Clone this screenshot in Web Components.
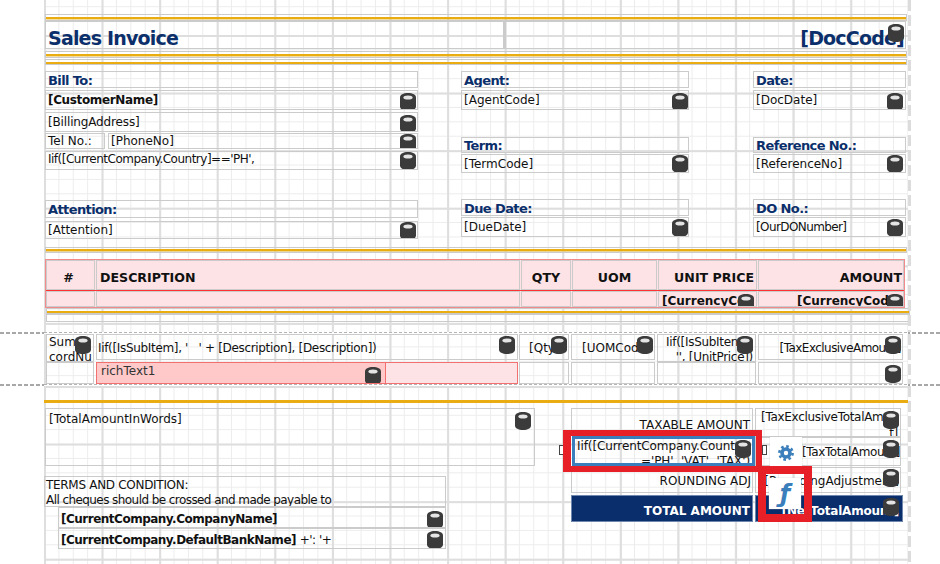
<!doctype html>
<html>
<head>
<meta charset="utf-8">
<title>Sales Invoice designer</title>
<style>
  html, body { margin: 0; height: 100%; overflow: hidden; background: #fff; }
  body { font: 12px "DejaVu Sans", Verdana, sans-serif; color: #111; }
</style>
</head>
<body>
<report-surface>
  <report-band top="0" height="332" grid="35">
    <report-cell at="45 14 862 7" rule="17"></report-cell>
    <report-cell at="45 21 459 28" kind="title" style="--pad-top:6px">Sales Invoice</report-cell>
    <report-cell at="504 21 402 28" kind="title" align="right" db="887 24" class="split" style="--pad-top:6px;--pad-right:1px">[DocCode]</report-cell>
    <report-cell at="45 51 862 7" rule="54"></report-cell>
    <report-cell at="45 59 862 6" rule="62"></report-cell>

    <report-cell at="45 71 373 17" kind="label" style="--pad-top:1px">Bill To:</report-cell>
    <report-cell at="45 90 373 20" kind="strong" db="400 93">[CustomerName]</report-cell>
    <report-cell at="45 112 373 20" db="400 115" style="--track:-.15px">[BillingAddress]</report-cell>
    <report-cell at="45 133 60 16">Tel No.:</report-cell>
    <report-cell at="108 133 310 16" db="400 134">[PhoneNo]</report-cell>
    <report-cell at="45 151 373 19" valign="top" db="400 152" style="--track:-.5px">Iif([CurrentCompany.Country]=='PH',</report-cell>
    <report-cell at="45 200 373 18" kind="label" style="--pad-top:0">Attention:</report-cell>
    <report-cell at="45 221 373 18" db="400 222">[Attention]</report-cell>

    <report-cell at="461 71 228 17" kind="label" style="--pad-top:1px">Agent:</report-cell>
    <report-cell at="461 90 228 20" db="672 93">[AgentCode]</report-cell>
    <report-cell at="461 137 228 16" kind="label" style="--pad-top:0">Term:</report-cell>
    <report-cell at="461 154 228 19" db="672 155">[TermCode]</report-cell>
    <report-cell at="461 199 228 17" kind="label" style="--pad-top:1px">Due Date:</report-cell>
    <report-cell at="461 217 228 20" db="672 219">[DueDate]</report-cell>

    <report-cell at="753 71 153 17" kind="label" style="--pad-top:1px">Date:</report-cell>
    <report-cell at="753 90 153 20" db="887 93">[DocDate]</report-cell>
    <report-cell at="753 137 153 16" kind="label" style="--pad-top:0">Reference No.:</report-cell>
    <report-cell at="753 154 153 19" db="887 155">[ReferenceNo]</report-cell>
    <report-cell at="753 199 153 17" kind="label" style="--pad-top:1px">DO No.:</report-cell>
    <report-cell at="753 217 153 20" db="887 219" style="--track:-.6px">[OurDONumber]</report-cell>

    <report-cell at="45 247 862 6" rule="249"></report-cell>

    <report-cell at="45 259 860 49" style="--fill:#fde3e5;--line:#f18a8a"></report-cell>
    <report-cell at="46 260 49 30" kind="head" align="center" style="--pad-top:5px;--pad-right:6px">#</report-cell>
    <report-cell at="96 260 424 30" kind="head" style="--pad-top:5px;--inset:3px">DESCRIPTION</report-cell>
    <report-cell at="521 260 50 30" kind="head" align="center" style="--pad-top:5px">QTY</report-cell>
    <report-cell at="572 260 85 30" kind="head" align="center" style="--pad-top:5px">UOM</report-cell>
    <report-cell at="658 260 99 30" kind="head" align="right" style="--pad-top:5px">UNIT PRICE</report-cell>
    <report-cell at="758 260 146 30" kind="head" align="right" style="--pad-top:5px;--pad-right:1px">AMOUNT</report-cell>
    <report-cell at="46 291 49 16"></report-cell>
    <report-cell at="96 291 424 16"></report-cell>
    <report-cell at="521 291 50 16"></report-cell>
    <report-cell at="572 291 85 16"></report-cell>
    <report-cell at="658 291 99 16" kind="strong" db="738 294" style="--inset:3px;--pad-top:3px;--track:0">[CurrencyCo</report-cell>
    <report-cell at="758 291 146 16" kind="strong" db="887 294" style="--inset:38px;--pad-top:3px;--track:0">[CurrencyCod</report-cell>
    <report-cell at="46 290 858 1" style="--line-width:0;--fill:#f33"></report-cell>

    <report-cell at="46 308 864 6" rule="311"></report-cell>
    <report-cell at="46 314 864 8"></report-cell>
  </report-band>

  <band-divider></band-divider>

  <report-band top="334" height="50" grid="-2">
    <report-cell at="46 334 48 28" valign="top" db="75 336" style="--lead:15px">Sum<br>cordNu</report-cell>
    <report-cell at="96 334 422 26" db="499 336" style="--track:-.33px;--pad-top:1px;--inset:1px">Iif([IsSubItem], '&nbsp;&nbsp;&nbsp;' + [Description], [Description])</report-cell>
    <report-cell at="519 334 50 26" db="551 336" style="--inset:9px;--pad-top:1px">[Qty]</report-cell>
    <report-cell at="571 334 84 26" db="637 336" style="--inset:10px;--pad-top:1px">[UOMCode]</report-cell>
    <report-cell at="657 334 99 28" valign="top" db="737 336" style="--inset:8px;--lead:15px;--track:-.3px">Iif([IsSubIten<br><span class="line-end">'', [UnitPrice])</span></report-cell>
    <report-cell at="758 334 145 26" align="right" db="885 336" style="--track:-.55px;--pad-top:1px;--pad-right:1px">[TaxExclusiveAmount]</report-cell>

    <report-cell at="46 362 48 22"></report-cell>
    <report-cell at="96 362 290 22" valign="top" db="365 367" style="--fill:#ffc9c9;--line:#f27070;--ink:#333;--inset:4px;--pad-top:1px">richText1</report-cell>
    <report-cell at="385 362 133 22" style="--fill:#fde3e5;--line:#f27070"></report-cell>
    <report-cell at="519 362 50 22"></report-cell>
    <report-cell at="571 362 84 22"></report-cell>
    <report-cell at="657 362 99 22"></report-cell>
    <report-cell at="758 362 145 22" db="885 365"></report-cell>
  </report-band>

  <band-divider></band-divider>

  <report-band top="386" height="178">
    <report-cell at="44 400 864 3" style="--line-width:0;--fill:#e9ad12"></report-cell>
    <report-cell at="45 408 490 58" valign="top" db="515 412" style="--pad-top:3px;--inset:3px">[TotalAmountInWords]</report-cell>

    <report-cell at="44 476 402 31" valign="top" style="--lead:15px;--inset:1px;--pad-top:1px;--track:-.3px">TERMS AND CONDITION:<br><span style="letter-spacing:-.57px">All cheques should be crossed and made payable to</span></report-cell>
    <report-cell at="58 507 388 21" kind="strong" db="427 511" style="--inset:2px;--pad-top:3px;--track:-.5px">[CurrentCompany.CompanyName]</report-cell>
    <report-cell at="58 528 388 21" kind="strong" db="427 531" style="--inset:2px;--pad-top:3px;--track:-.5px">[CurrentCompany.DefaultBankName] <span style="font-weight:400">+': '+</span></report-cell>

    <report-cell at="571 408 182 28" align="right" style="--pad-top:6px">TAXABLE AMOUNT</report-cell>
    <report-cell at="755 408 146 29" valign="top" db="883 411" style="--lead:16px;--inset:5px;--track:-.3px">[TaxExclusiveTotalAmou<br><span class="line-end">t]</span></report-cell>
    <report-cell at="755 437 146 29" db="883 440" style="--inset:46px;--track:-.4px">[TaxTotalAmount]</report-cell>
    <report-cell at="571 467 182 26" align="right" style="--pad-top:2px;--pad-right:1px">ROUNDING ADJ</report-cell>
    <report-cell at="755 467 146 26" align="right" db="883 469" style="--pad-top:2px;--pad-right:1px">[RoundingAdjustment]</report-cell>
    <report-cell at="571 495 182 27" kind="strong" align="right" style="--fill:#0a2d6c;--line:#6f86ad;--ink:#fff;--pad-top:5px;--track:0">TOTAL AMOUNT</report-cell>
    <report-cell at="755 495 148 27" kind="strong" align="right" db="883 498" style="--fill:#0a2d6c;--line:#6f86ad;--ink:#fff;--pad-top:5px;--pad-right:3px;--track:-.2px">[NetTotalAmount]</report-cell>

    <report-cell at="572 436 183 30" valign="top" style="--line:#3a7ebb;--line-width:3px;--lead:15px;--inset:2px;--track:-.1px">Iif([CurrentCompany.Count<br><span class="line-end">='PH', 'VAT', 'TAX')</span></report-cell>
    <db-icon style="position:absolute;left:691px;top:54px"></db-icon>
    <smart-tag glyph="gear" style="left:726px;top:51px"></smart-tag>
    <drag-handle style="left:515px;top:59px"></drag-handle>
    <drag-handle style="left:718px;top:59px"></drag-handle>
    <red-frame style="left:519px;top:44px;width:199px;height:42px;border-width:6px 6px 6px 8px"></red-frame>
    <red-frame style="left:714px;top:80px;width:54px;height:56px"></red-frame>
    <smart-tag glyph="fx" style="left:725px;top:92px"></smart-tag>
  </report-band>
</report-surface>

<script>
  // Icon: the little database cylinder shown on bound fields.
  customElements.define('db-icon', class extends HTMLElement {
    constructor () {
      super()
      this.attachShadow({ mode: 'open' }).innerHTML = `
        <style>
          :host { display: block; width: 16px; height: 18px; }
          svg { display: block; }
        </style>
        <svg width="16" height="18" viewBox="0 0 16 18">
          <path fill="#3b3b3b" d="M0 4.5C0 1.6 3.4 0 8 0s8 1.6 8 4.5v9c0 2.9-3.4 4.5-8 4.5s-8-1.6-8-4.5z"/>
          <ellipse cx="8" cy="4.4" rx="4.6" ry="2" fill="#e4e4e4"/>
        </svg>`
    }
  })

  // A bound field or label, placed on the band by page coordinates.
  customElements.define('report-cell', class extends HTMLElement {
    constructor () {
      super()
      this.attachShadow({ mode: 'open' }).innerHTML = `
        <style>
          :host {
            position: absolute;
            box-sizing: border-box;
            display: flex;
            align-items: center;
            overflow: hidden;
            padding: var(--pad-top, 0) var(--pad-right, 2px) 0 var(--inset, 2px);
            border: var(--line-width, 1px) solid var(--line, #cbcbcb);
            background-color: var(--fill, transparent);
            color: var(--ink, #111);
            font-size: 12px;
            letter-spacing: var(--track, 0);
            line-height: var(--lead, normal);
            white-space: nowrap;
          }
          :host([valign=top]) { align-items: flex-start; }
          :host([align=right]) { justify-content: flex-end; }
          :host([align=center]) { justify-content: center; }
          :host([kind=label]) { font-weight: 700; font-size: 13px; letter-spacing: -.6px; color: #0b2f6b; }
          :host([kind=strong]) { font-weight: 700; letter-spacing: var(--track, -.35px); }
          :host([kind=head]) { font-weight: 700; font-size: 12.6px; }
          :host([kind=title]) { font-weight: 700; font-size: 19px; letter-spacing: -.8px; color: #0b2f6b; }
          :host(.split) { border-left: 2px solid #cbcbcb; }
          :host([rule])::after {
            content: '';
            position: absolute;
            left: 0;
            right: 0;
            top: var(--rule-top, 0);
            height: 2px;
            background: #e9ad12;
            box-shadow: 0 1px rgba(233, 173, 18, .4);
          }
          .text { display: block; }
          :host([valign=top]) .text { flex: 1; }
          ::slotted(.line-end) { display: block; text-align: right; }
          db-icon { position: absolute; }
        </style>
        <span class="text"><slot></slot></span>`
    }

    connectedCallback () {
      const band = this.closest('report-band')
      const top = Number(band.getAttribute('top'))
      const [x, y, w, h] = this.getAttribute('at').split(' ').map(Number)
      this.style.left = `${x - 44}px`
      this.style.top = `${y - top}px`
      this.style.width = `${w}px`
      this.style.height = `${h}px`

      if (this.hasAttribute('rule')) {
        this.style.setProperty('--rule-top', `${Number(this.getAttribute('rule')) - y - 1}px`)
      }

      if (this.hasAttribute('db')) {
        const [ix, iy] = this.getAttribute('db').split(' ').map(Number)
        const icon = document.createElement('db-icon')
        icon.style.left = `${ix - x - 1}px`
        icon.style.top = `${iy - y - 1}px`
        this.shadowRoot.appendChild(icon)
      }
    }
  })

  // One designer band with its snap grid.
  customElements.define('report-band', class extends HTMLElement {
    constructor () {
      super()
      this.attachShadow({ mode: 'open' }).innerHTML = `
        <style>
          :host {
            display: block;
            position: relative;
            box-sizing: border-box;
            width: 867px;
            margin-left: 44px;
            background-image:
              linear-gradient(to right, #dedede 2px, transparent 2px),
              linear-gradient(to bottom, #dedede 2px, transparent 2px),
              linear-gradient(to right, #ececec 1px, transparent 1px),
              linear-gradient(to bottom, #ececec 1px, transparent 1px);
            background-size: 57.6px 57.6px, 57.6px 57.6px, 14.4px 14.4px, 14.4px 14.4px;
            background-position: 0 var(--grid-y, 0);
            background-repeat: repeat;
            background-clip: content-box;
            padding-right: 3px;
          }
          :host::after {
            content: '';
            position: absolute;
            top: 0;
            bottom: 0;
            right: 0;
            width: 3px;
            background: repeating-linear-gradient(to bottom, #dcdcdc 0 11px, transparent 11px 15px);
          }
        </style>
        <slot></slot>`
    }

    connectedCallback () {
      this.style.height = `${this.getAttribute('height')}px`
      this.style.setProperty('--grid-y', `${this.getAttribute('grid') || 0}px`)
    }
  })

  // Dashed line between the bands, running the whole window width.
  customElements.define('band-divider', class extends HTMLElement {
    constructor () {
      super()
      this.attachShadow({ mode: 'open' }).innerHTML = `
        <style>
          :host {
            display: block;
            position: relative;
            height: 2px;
            background: repeating-linear-gradient(to right, #a8a8a8 0 4px, transparent 4px 6px);
          }
          :host::before {
            content: '';
            position: absolute;
            left: 44px;
            width: 864px;
            top: 0;
            height: 2px;
            background: linear-gradient(#fff, #fff) 0 1px / 100% 1px no-repeat,
              repeating-linear-gradient(to right, #b4b4b4 0 3px, #fff 3px 5px);
          }
        </style>`
    }
  })

  // Red annotation rectangle drawn over the screenshot.
  customElements.define('red-frame', class extends HTMLElement {
    constructor () {
      super()
      this.attachShadow({ mode: 'open' }).innerHTML = `
        <style>
          :host { position: absolute; box-sizing: border-box; border: 8px solid #e71f26; }
        </style>`
    }
  })

  // Small square resize handle of the selected field.
  customElements.define('drag-handle', class extends HTMLElement {
    constructor () {
      super()
      this.attachShadow({ mode: 'open' }).innerHTML = `
        <style>
          :host { position: absolute; box-sizing: border-box; width: 5px; height: 10px; background: #fff; border: 1px solid #444; }
        </style>`
    }
  })

  // Floating action button next to the selected field.
  customElements.define('smart-tag', class extends HTMLElement {
    constructor () {
      super()
      const gear = `
        <svg width="16" height="16" viewBox="0 0 16 16">
          <circle cx="8" cy="8" r="6.6" fill="none" stroke="#3a7ebb" stroke-width="2.6" stroke-dasharray="2.6 2.58"/>
          <circle cx="8" cy="8" r="4" fill="none" stroke="#3a7ebb" stroke-width="3.6"/>
        </svg>`
      const fx = '<span class="fx">ƒ</span>'
      this.attachShadow({ mode: 'open' }).innerHTML = `
        <style>
          :host {
            position: absolute;
            display: flex;
            align-items: center;
            justify-content: center;
            width: 32px;
            height: 31px;
            background: #fff;
            box-shadow: 0 0 1px #bbb;
          }
          .fx { font: italic 700 24px "DejaVu Sans", sans-serif; color: #3a7ebb; line-height: 1; }
        </style>
        ${this.getAttribute('glyph') === 'gear' ? gear : fx}`
    }
  })

  customElements.define('report-surface', class extends HTMLElement {
    constructor () {
      super()
      this.attachShadow({ mode: 'open' }).innerHTML = `
        <style>
          :host { display: block; width: 940px; height: 564px; overflow: hidden; }
        </style>
        <slot></slot>`
    }
  })
</script>
</body>
</html>
